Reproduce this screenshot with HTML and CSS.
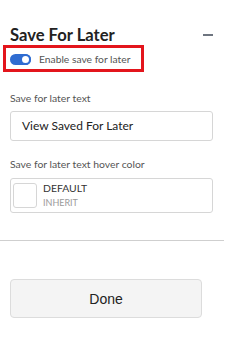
FILE: index.html
```html
<!DOCTYPE html>
<html>
<head>
<meta charset="utf-8">
<link rel="stylesheet" href="styles.css">
</head>
<body>
<div class="panel">
  <div class="section">
    <div class="header">
      <h2 class="title">Save For Later</h2>
      <span class="collapse"></span>
    </div>
    <div class="highlight">
      <span class="toggle"><span class="knob"></span></span>
      <span class="toggle-label">Enable save for later</span>
    </div>
    <label class="field-label first">Save for later text</label>
    <div class="input">View Saved For Later</div>
    <label class="field-label second">Save for later text hover color</label>
    <div class="color-box">
      <span class="swatch"></span>
      <div class="color-text">
        <div class="color-name">DEFAULT</div>
        <div class="color-sub">INHERIT</div>
      </div>
    </div>
  </div>
  <div class="divider"></div>
  <div class="footer">
    <button class="done">Done</button>
  </div>
</div>
</body>
</html>
```
FILE: styles.css
```css
html, body {
  margin: 0;
  padding: 0;
  background: #fff;
}
body {
  font-family: Lato, "Open Sans", sans-serif;
  color: #333;
}
.panel {
  width: 224px;
}
.section {
  padding: 25px 11px 0 10px;
}
.header {
  display: flex;
  align-items: center;
  justify-content: space-between;
  height: 20px;
}
.title {
  margin: 0;
  font-size: 16.6px;
  line-height: 20px;
  font-weight: 700;
  color: #222;
}
.collapse {
  display: block;
  width: 10px;
  height: 2px;
  background: #6e7580;
}
.highlight {
  display: flex;
  align-items: center;
  width: 131px;
  height: 21px;
  margin-left: -7px;
  border: 3px solid #e3151c;
  padding-left: 4px;
  box-sizing: content-box;
}
.toggle {
  position: relative;
  display: block;
  flex: none;
  width: 21px;
  height: 11px;
  border-radius: 6px;
  background: #2f6cd1;
  margin-top: 1px;
}
.knob {
  position: absolute;
  right: 0;
  top: 0;
  width: 7px;
  height: 7px;
  border-radius: 50%;
  background: #fff;
  border: 2px solid #2f6cd1;
}
.toggle-label {
  margin-left: 8px;
  font-size: 10.3px;
  line-height: 14px;
  color: #555;
  margin-top: 1px;
  white-space: nowrap;
}
.field-label {
  display: block;
  font-size: 10.4px;
  line-height: 14px;
  color: #555;
}
.field-label.first {
  margin-top: 19px;
}
.field-label.second {
  margin-top: 16px;
}
.input {
  margin-top: 6px;
  height: 28px;
  border: 1px solid #d6d6d6;
  border-radius: 3px;
  padding-left: 11px;
  font-size: 12px;
  line-height: 28px;
  color: #222;
}
.color-box {
  display: flex;
  align-items: flex-start;
  margin-top: 7px;
  height: 33px;
  border: 1px solid #d6d6d6;
  border-radius: 3px;
  padding: 0 0 0 2px;
}
.swatch {
  display: block;
  flex: none;
  width: 22px;
  height: 23px;
  border: 1px solid #d6d6d6;
  border-radius: 3px;
  margin-top: 4px;
}
.color-text {
  margin-left: 6px;
  margin-top: 3px;
}
.color-name {
  font-size: 10.4px;
  line-height: 13px;
  color: #333;
}
.color-sub {
  margin-top: 2px;
  font-size: 9px;
  line-height: 12px;
  color: #9a9a9a;
}
.divider {
  margin-top: 27px;
  height: 1px;
  background: #cfcfcf;
}
.footer {
  padding: 38px 0 0 10px;
}
.done {
  display: block;
  width: 192px;
  height: 39px;
  background: #f4f4f4;
  border: 1px solid #dcdcdc;
  border-radius: 4px;
  font-family: "Liberation Sans", Arial, sans-serif;
  font-size: 14px;
  color: #222;
  padding: 0;
}
```
